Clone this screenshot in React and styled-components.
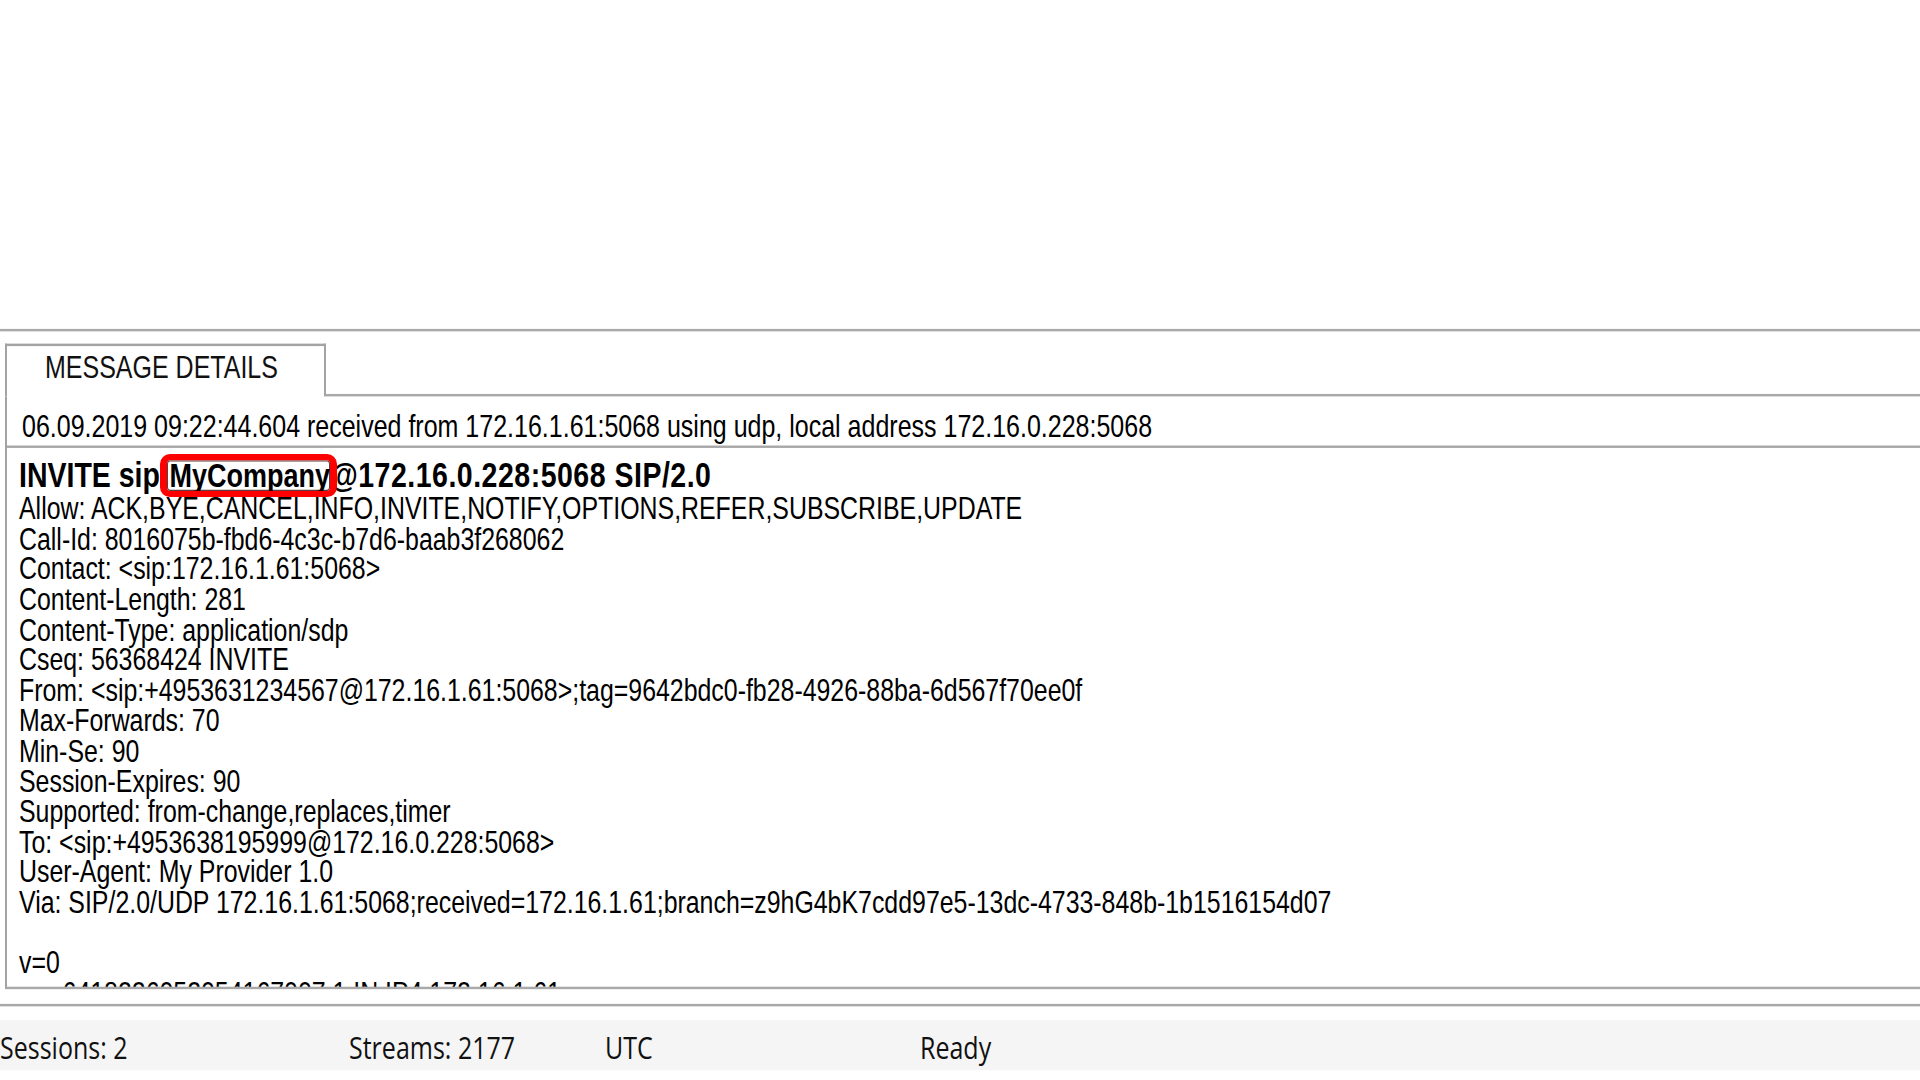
import React from "react";
import styled, { createGlobalStyle } from "styled-components";

const Global = createGlobalStyle`
  html, body { margin: 0; padding: 0; background: #ffffff; overflow: hidden; }
  #root { width: 1920px; height: 1080px; overflow: hidden; }
`;

/* The reference is a 1920x880 capture stretched to 1080 rows. */
const Page = styled.div`
  width: 1920px;
  height: 880px;
  display: flex;
  flex-direction: column;
  background: #ffffff;
  overflow: hidden;
  transform: scaleY(1.22727);
  transform-origin: 0 0;
  font-family: "Liberation Sans", Arial, sans-serif;
  color: #000000;
`;

const EmptyArea = styled.div`
  height: 268px;
  flex: none;
`;

const Rule = styled.div`
  flex: none;
  height: 2px;
  background: #a9a9a9;
  margin-top: ${(p) => p.$before || 0}px;
`;

const TabStrip = styled.div`
  flex: none;
  height: 43px;
  display: flex;
  margin-top: 10px;
`;

const Tab = styled.div`
  flex: none;
  width: 321px;
  margin-left: 5px;
  box-sizing: border-box;
  border: 2px solid #a3a3a3;
  border-bottom: none;
  padding-left: 38px;
  font-size: 25px;
  line-height: 35px;
  color: #111;
  background: #fff;
  white-space: nowrap;
`;

const TabFiller = styled.div`
  flex: 1;
  box-sizing: border-box;
  border-bottom: 2px solid #a9a9a9;
`;

const Panel = styled.div`
  flex: none;
  margin-left: 5px;
  border-left: 2px solid #a3a3a3;
  border-bottom: 2px solid #a9a9a9;
  display: flex;
  flex-direction: column;
`;

const InfoRow = styled.div`
  height: 42px;
  box-sizing: border-box;
  padding: 7px 0 0 15px;
  font-size: 25px;
  line-height: 34px;
  white-space: nowrap;
  border-bottom: 2px solid #a9a9a9;
`;

const Content = styled.div`
  height: 439px;
  box-sizing: border-box;
  padding: 9px 0 0 12px;
  overflow: hidden;
  white-space: nowrap;
`;

const HeadLine = styled.div`
  font-size: 28.5px;
  font-weight: 700;
  line-height: 27px;
`;

const HeadTail = styled.span`
  letter-spacing: 0.5px;
`;

const Line = styled.div`
  font-size: 24.9px;
  line-height: 24.7px;
  height: 24.7px;
`;

const Marked = styled.span`
  position: relative;
  font-size: 27px;
  &::after {
    content: "";
    position: absolute;
    left: -9px;
    right: -7px;
    top: -3px;
    bottom: -2px;
    border-style: solid;
    border-color: #ff0000;
    border-width: 5px 7px;
    border-radius: 10px / 8px;
    box-shadow: inset 0 0 0 1px rgba(40, 0, 0, 0.75);
  }
`;

const StatusBar = styled.div`
  flex: none;
  height: 41px;
  margin-top: 11px;
  box-sizing: border-box;
  padding-top: 3px;
  background: #f5f5f5;
  display: flex;
  font-family: "Open Sans", "Noto Sans", sans-serif;
  font-size: 25px;
  line-height: 38px;
  color: #111;
`;

const StatusCell = styled.div`
  flex: ${(p) => (p.$w ? "none" : "1")};
  width: ${(p) => (p.$w ? `${p.$w}px` : "auto")};
  white-space: nowrap;
`;

const headers = [
  "Allow: ACK,BYE,CANCEL,INFO,INVITE,NOTIFY,OPTIONS,REFER,SUBSCRIBE,UPDATE",
  "Call-Id: 8016075b-fbd6-4c3c-b7d6-baab3f268062",
  "Contact: <sip:172.16.1.61:5068>",
  "Content-Length: 281",
  "Content-Type: application/sdp",
  "Cseq: 56368424 INVITE",
  "From: <sip:+4953631234567@172.16.1.61:5068>;tag=9642bdc0-fb28-4926-88ba-6d567f70ee0f",
  "Max-Forwards: 70",
  "Min-Se: 90",
  "Session-Expires: 90",
  "Supported: from-change,replaces,timer",
  "To: <sip:+4953638195999@172.16.0.228:5068>",
  "User-Agent: My Provider 1.0",
  "Via: SIP/2.0/UDP 172.16.1.61:5068;received=172.16.1.61;branch=z9hG4bK7cdd97e5-13dc-4733-848b-1b1516154d07",
  "\u00a0",
  "v=0",
  "o=- 6418226052054167007 1 IN IP4 172.16.1.61",
  "s=-",
];

export default function App() {
  return (
    <>
      <Global />
      <Page>
        <EmptyArea />
        <Rule />
        <TabStrip>
          <Tab>MESSAGE DETAILS</Tab>
          <TabFiller />
        </TabStrip>
        <Panel>
          <InfoRow>
            06.09.2019 09:22:44.604 received from 172.16.1.61:5068 using udp, local address 172.16.0.228:5068
          </InfoRow>
          <Content>
            <HeadLine>
              INVITE sip:<Marked>MyCompany</Marked>
              <HeadTail>@172.16.0.228:5068 SIP/2.0</HeadTail>
            </HeadLine>
            {headers.map((h, i) => (
              <Line key={i}>{h}</Line>
            ))}
          </Content>
        </Panel>
        <Rule $before={12} />
        <StatusBar>
          <StatusCell $w={349}>Sessions: 2</StatusCell>
          <StatusCell $w={256}>Streams: 2177</StatusCell>
          <StatusCell $w={315}>UTC</StatusCell>
          <StatusCell>Ready</StatusCell>
        </StatusBar>
      </Page>
    </>
  );
}
